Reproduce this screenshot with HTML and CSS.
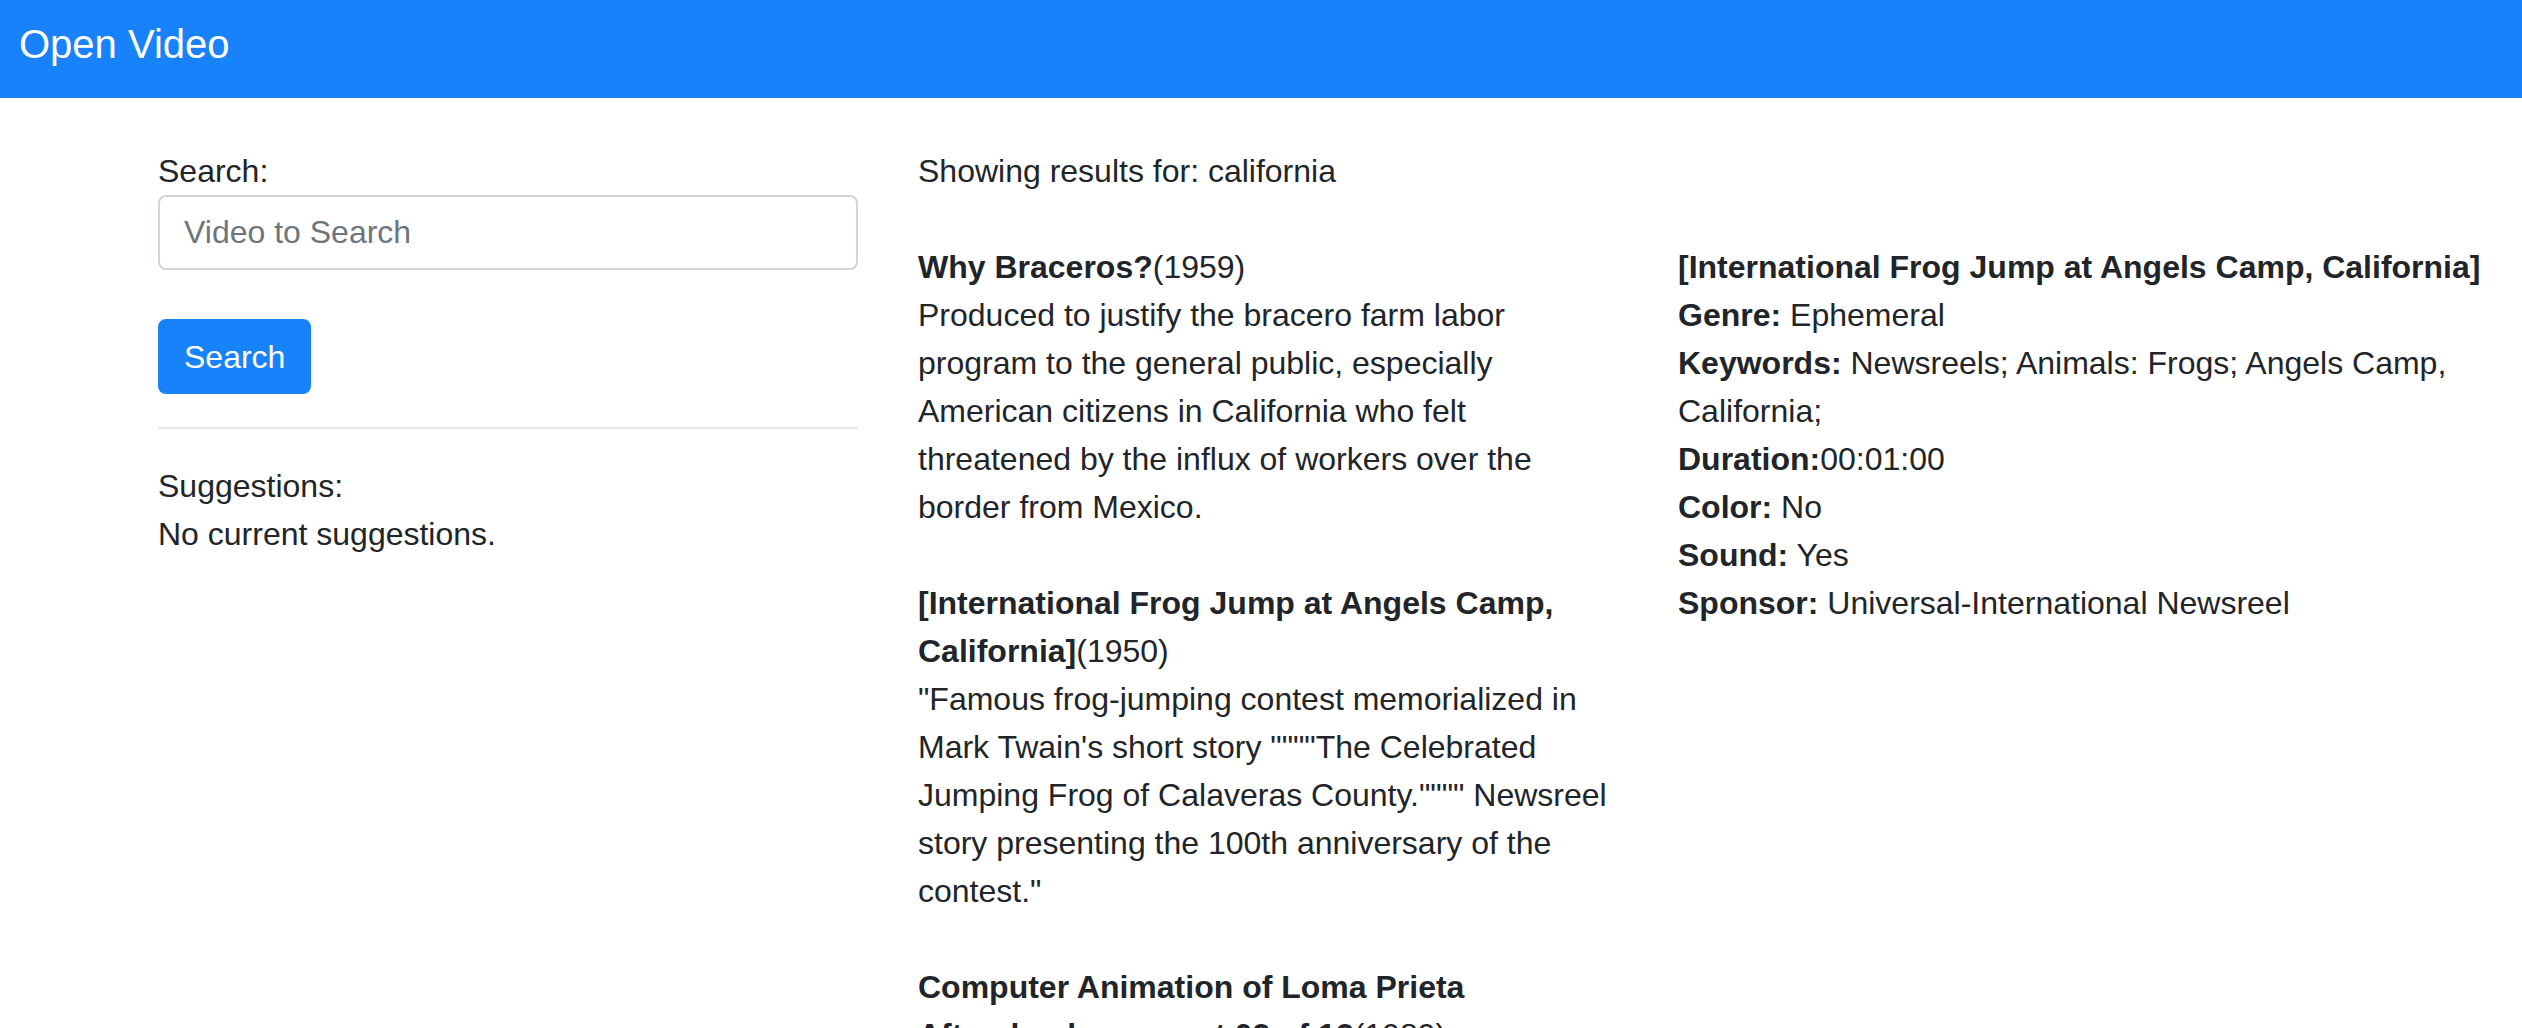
FILE: index.html
```html
<!DOCTYPE html>
<html lang="en">
<head>
<meta charset="utf-8">
<title>Open Video</title>
<link rel="stylesheet" href="styles.css">
</head>
<body>
<div class="page">
  <nav class="navbar">
    <a class="brand" href="#">Open Video</a>
  </nav>
  <main class="container">
    <section class="col col-search">
      <form class="search-form">
        <label class="label" for="q">Search:</label>
        <input class="input" id="q" type="text" placeholder="Video to Search">
        <button class="btn" type="button">Search</button>
      </form>
      <hr class="divider">
      <div class="suggestions">
        <div>Suggestions:</div>
        <div>No current suggestions.</div>
      </div>
    </section>
    <section class="col col-results">
      <p class="showing">Showing results for: california</p>
      <div class="result"><b>Why Braceros?</b>(1959)<br>Produced to justify the bracero farm labor program to the general public, especially American citizens in California who felt threatened by the influx of workers over the border from Mexico.</div>
      <div class="result"><b>[International Frog Jump at Angels Camp, California]</b>(1950)<br>"Famous frog-jumping contest memorialized in Mark Twain's short story """"The Celebrated Jumping Frog of Calaveras County."""" Newsreel story presenting the 100th anniversary of the contest."</div>
      <div class="result"><b>Computer Animation of Loma Prieta Aftershock segment 02 of 12</b>(1989)</div>
    </section>
    <section class="col col-detail">
      <div class="detail-title">[International Frog Jump at Angels Camp, California]</div>
      <div><b>Genre:</b> Ephemeral</div>
      <div><b>Keywords:</b> Newsreels; Animals: Frogs; Angels Camp, California;</div>
      <div><b>Duration:</b>00:01:00</div>
      <div><b>Color:</b> No</div>
      <div><b>Sound:</b> Yes</div>
      <div><b>Sponsor:</b> Universal-International Newsreel</div>
    </section>
  </main>
</div>
</body>
</html>
```

FILE: styles.css
```css
html, body {
  margin: 0;
  padding: 0;
  background: #ffffff;
}

body {
  font-family: "Liberation Sans", Arial, Helvetica, sans-serif;
  font-size: 32px;
  line-height: 48px;
  color: #212529;
}

.page {
  height: 100vh;
  overflow: hidden;
}

.navbar {
  box-sizing: border-box;
  height: 98px;
  background: #1882fb;
  padding: 14px 19px 0;
}

.brand {
  display: inline-block;
  color: #ffffff;
  text-decoration: none;
  font-size: 40px;
  line-height: 60px;
}

.container {
  display: grid;
  grid-template-columns: 760px 760px 1fr;
  margin: 49px 0 0 128px;
}

.col {
  padding: 0 30px;
}

.search-form {
  display: flex;
  flex-direction: column;
  align-items: flex-start;
}

.label {
  display: block;
}

.input {
  box-sizing: border-box;
  width: 100%;
  height: 75px;
  padding: 12px 24px;
  font-family: inherit;
  font-size: 32px;
  line-height: 48px;
  color: #495057;
  background: #ffffff;
  border: 2px solid #ced4da;
  border-radius: 8px;
  outline: none;
}

.input::placeholder {
  color: #6c757d;
  opacity: 1;
}

.btn {
  box-sizing: border-box;
  margin-top: 49px;
  height: 75px;
  padding: 0 24px;
  font-family: inherit;
  font-size: 32px;
  line-height: 48px;
  color: #ffffff;
  background: #1882fb;
  border: 2px solid #1882fb;
  border-radius: 8px;
}

.divider {
  margin: 33px 0;
  border: 0;
  height: 2px;
  background: #e5e5e5;
}

.showing {
  margin: 0 0 48px;
}

.result {
  margin-bottom: 48px;
}

.result b,
.col-detail b,
.detail-title {
  font-weight: 700;
}

.col-detail {
  padding: 96px 0 0 30px;
}
```
